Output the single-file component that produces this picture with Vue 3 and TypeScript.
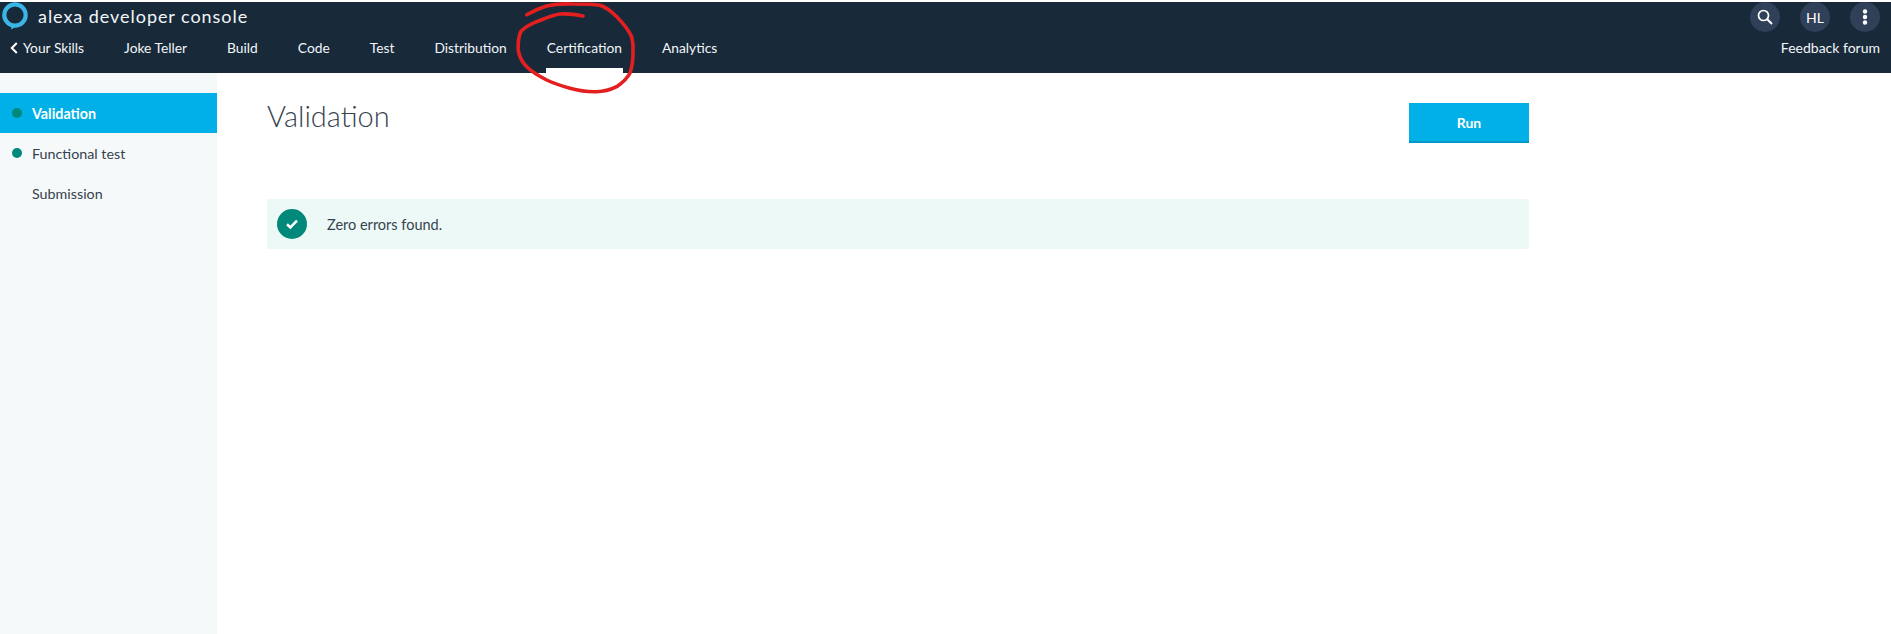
<script setup lang="ts">
const tabs: string[] = ['Joke Teller', 'Build', 'Code', 'Test', 'Distribution', 'Certification', 'Analytics']
const steps = [
  { label: 'Validation', done: true, active: true },
  { label: 'Functional test', done: true, active: false },
  { label: 'Submission', done: false, active: false },
]
</script>

<template>
  <div class="page">
    <header class="header">
      <div class="top">
        <div class="brand">
          <svg class="logo" width="28" height="28" viewBox="0 0 28 28">
            <circle cx="14" cy="13" r="10.7" fill="none" stroke="#3ab5e6" stroke-width="4.2" />
            <path d="M10 22.5 10.4 27.4 16.5 23.6Z" fill="#3ab5e6" />
          </svg>
          <span class="brand-name">alexa developer console</span>
        </div>
        <div class="actions">
          <span class="circle">
            <svg width="18" height="18" viewBox="0 0 18 18">
              <circle cx="7.5" cy="7.5" r="5" fill="none" stroke="#fff" stroke-width="1.7" />
              <path d="M11.2 11.2 16 16" stroke="#fff" stroke-width="2" />
            </svg>
          </span>
          <span class="circle">HL</span>
          <span class="circle">
            <svg width="6" height="16" viewBox="0 0 6 16">
              <circle cx="3" cy="2.5" r="2.2" fill="#fff" />
              <circle cx="3" cy="8" r="2.2" fill="#fff" />
              <circle cx="3" cy="13.5" r="2.2" fill="#fff" />
            </svg>
          </span>
        </div>
      </div>
      <nav class="nav">
        <a class="tab back">
          <svg width="8" height="12" viewBox="0 0 8 12">
            <path d="M6.8 1 1.8 6l5 5" fill="none" stroke="#fff" stroke-width="2" />
          </svg>
          Your Skills
        </a>
        <a v-for="t in tabs" :key="t" class="tab" :class="{ current: t === 'Certification' }">{{ t }}</a>
        <a class="tab feedback">Feedback forum</a>
      </nav>
    </header>

    <div class="body">
      <aside class="side">
        <div v-for="s in steps" :key="s.label" class="step" :class="{ active: s.active }">
          <span class="dot" :class="{ on: s.done }"></span>
          <span>{{ s.label }}</span>
        </div>
      </aside>
      <main class="main">
        <div class="head">
          <h1 class="title">Validation</h1>
          <button class="run">Run</button>
        </div>
        <div class="notice">
          <span class="ok">
            <svg width="14" height="12" viewBox="0 0 14 12">
              <path d="M2 6.2 5.4 9.4 12 2.6" fill="none" stroke="#fff" stroke-width="2.6" />
            </svg>
          </span>
          <span>Zero errors found.</span>
        </div>
      </main>
    </div>

    <svg class="scribble" width="160" height="100" viewBox="510 0 160 100">
      <path d="M526.7 14.7C533 11 540 8 546.7 6C555 4 565 3.6 573 4C585 4 593 4 600 5.3C608 8 612 12 616.7 16.7C623 23 628 29 631.7 36.7C633 42 633.5 47 633 53C633 60 632 67 630 73C627 79 622 83 616.7 86.7C610 90 603 91.7 596.7 91.7C587 92 578 90.5 570 88.3C562 86 554 83.5 546.7 80C539 76 532 72 526.7 66.7C522 62 519 56 518.3 50C517.8 43 518.5 37 520.7 31.7C525 27 531 24 536.7 21.7C544 19 552 15 560 14C568 13.5 576 14.5 583 16" fill="none" stroke="#e3201f" stroke-width="3.6" stroke-linecap="round" stroke-linejoin="round" />
    </svg>
  </div>
</template>

<style>
body { margin: 0; background: #fff; }
</style>

<style scoped>
.page {
  position: relative;
  width: 1891px;
  height: 634px;
  overflow: hidden;
  padding-top: 2px;
  box-sizing: border-box;
  display: flex;
  flex-direction: column;
  font-family: Lato, "Open Sans", sans-serif;
  color: #232f3e;
  background: #fff;
}
.header {
  height: 71px;
  flex: none;
  background: #18293a;
  color: #fff;
  display: flex;
  flex-direction: column;
}
.top {
  height: 30px;
  display: flex;
  justify-content: space-between;
  align-items: center;
  padding: 0 11px 0 1px;
}
.brand { display: flex; align-items: center; gap: 9px; }
.logo { display: block; margin-top: -2px; }
.brand-name {
  font-size: 18px;
  letter-spacing: 0.95px;
  color: #f2f6f8;
  margin-top: -2px;
}
.actions { display: flex; gap: 20px; }
.circle {
  width: 30px;
  height: 30px;
  border-radius: 50%;
  background: #2f4058;
  display: flex;
  align-items: center;
  justify-content: center;
  font-size: 14px;
}
.nav {
  flex: 1;
  display: flex;
  gap: 40px;
  padding-left: 10px;
  padding-right: 11px;
}
.tab {
  display: flex;
  align-items: center;
  height: 31px;
  font-size: 13.8px;
  color: #f2f6f8;
  position: relative;
  white-space: nowrap;
}
.back { gap: 5px; }
.feedback { margin-left: auto; font-size: 14px; }
.current::after {
  content: "";
  position: absolute;
  left: -1px;
  right: -1px;
  top: 36px;
  height: 5px;
  background: #fff;
}
.body { flex: 1; display: flex; min-height: 0; }
.side {
  width: 217px;
  flex: none;
  background: #f5f9fa;
  padding-top: 20px;
  box-sizing: border-box;
}
.step {
  height: 40px;
  display: flex;
  align-items: center;
  gap: 10px;
  padding-left: 12px;
  font-size: 14.3px;
  color: #36424f;
}
.step.active {
  background: #00b0e6;
  color: #fff;
  font-weight: 700;
}
.dot {
  width: 10px;
  height: 10px;
  border-radius: 50%;
  flex: none;
}
.dot.on { background: #00897b; }
.main {
  width: 1312px;
  box-sizing: border-box;
  padding: 29px 0 0 50px;
}
.head {
  display: flex;
  justify-content: space-between;
  align-items: flex-start;
  height: 97px;
}
.title {
  margin: 0;
  font-size: 29px;
  line-height: 28px;
  font-weight: 300;
  color: #36424f;
}
.run {
  width: 120px;
  height: 40px;
  margin-top: 1px;
  border: 0;
  border-bottom: 2px solid #0098c7;
  background: #00b0e6;
  color: #fff;
  font: 700 14px Lato, sans-serif;
  padding: 0;
}
.notice {
  height: 50px;
  background: #edf9f6;
  display: flex;
  align-items: center;
  gap: 20px;
  padding-left: 10px;
  font-size: 14.5px;
  color: #36424f;
}
.ok {
  width: 30px;
  height: 30px;
  border-radius: 50%;
  background: #00897b;
  display: flex;
  align-items: center;
  justify-content: center;
}
.scribble {
  position: absolute;
  left: 510px;
  top: 0;
}
</style>
